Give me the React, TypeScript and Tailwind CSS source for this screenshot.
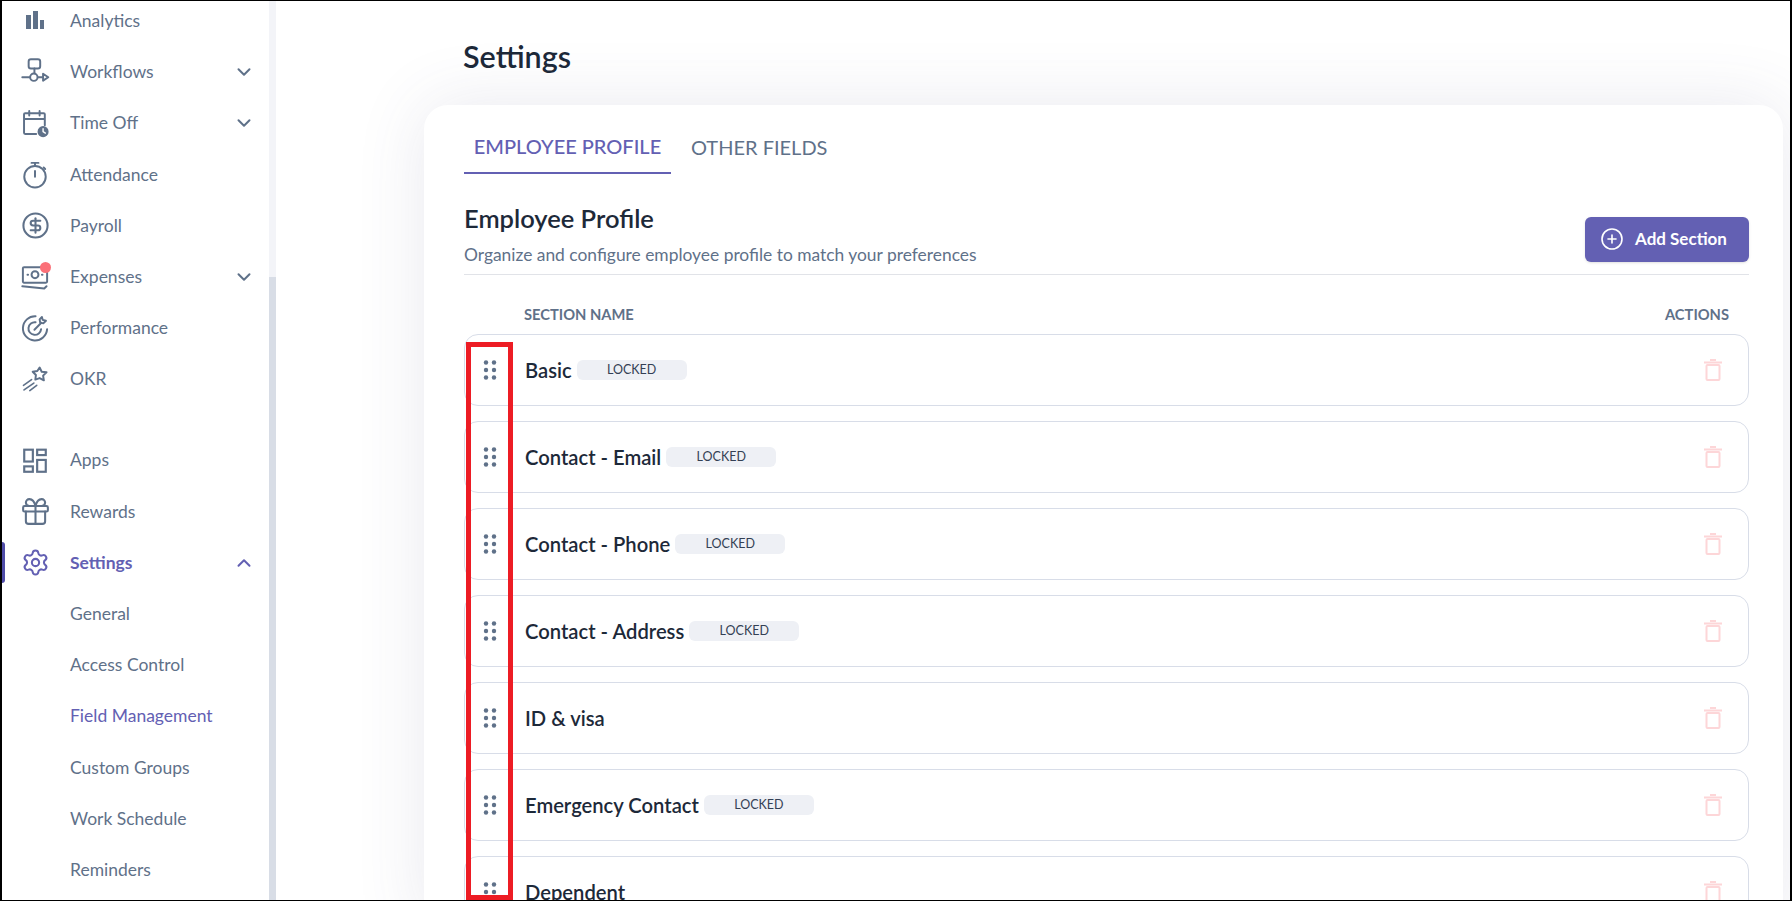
import { ChevronDown, ChevronUp, CirclePlus, CircleDollarSign, Gift, Settings } from "lucide-react";
import type { ReactNode } from "react";

const Svg = ({ children }: { children: ReactNode }) => (
  <svg width="30" height="30" viewBox="0 0 26 26" fill="none" stroke="currentColor" strokeWidth="1.7" strokeLinecap="round" strokeLinejoin="round">
    {children}
  </svg>
);

const AnalyticsIcon = () => (
  <svg width="26" height="26" viewBox="0 0 26 26" fill="currentColor">
    <rect x="4" y="7" width="5" height="14" />
    <rect x="11" y="3" width="5" height="18" />
    <rect x="18" y="12" width="4" height="9" />
  </svg>
);

const WorkflowsIcon = () => (
  <Svg>
    <rect x="7.5" y="2" width="10" height="8" rx="2" />
    <path d="M12.5 10v4" />
    <circle cx="12" cy="17.5" r="3.2" />
    <path d="M2 17.5h6.5M15.5 17.5h4M20 14.5l4.5 3-4.5 3z" />
  </Svg>
);

const TimeOffIcon = () => (
  <Svg>
    <path d="M14 22.500H4.500a1 1 0 0 1-1-1V5.500a1 1 0 0 1 1-1h16a1 1 0 0 1 1 1V15M3.500 9.500h18M8 2.500v4M17 2.500v4" />
    <circle cx="20" cy="20.500" r="4.800" fill="currentColor" stroke="none" />
    <path d="M20 18v2.500l2 1.200" stroke="#fff" strokeWidth="1.200" />
  </Svg>
);

const AttendanceIcon = () => (
  <Svg>
    <circle cx="13" cy="14.500" r="9.300" />
    <path d="M10 2.500h6M13 2.500v2.500M13 9.500v5M20.500 6.500l1.300 1.300" />
  </Svg>
);

const ExpensesIcon = () => (
  <Svg>
    <path d="M3.500 4.500h19a1 1 0 0 1 1 1v11.500a1 1 0 0 1-1 1h-19a1 1 0 0 1-1-1V5.500a1 1 0 0 1 1-1z" />
    <circle cx="13" cy="11" r="3" />
    <path d="M6.500 11h.5M19 11h.5M2 21l19 2 2-2" />
  </Svg>
);

const PerformanceIcon = () => (
  <Svg>
    <path d="M13.500 2.800A10.500 10.500 0 1 0 23.500 14" />
    <path d="M13.500 8a5.500 5.500 0 1 0 4.800 6" />
    <path d="M12.500 14.500l6-6" />
    <path d="M17 5.500l2-2 .7 2.500 2.800.7-2.300 2.300-2.700-.7z" />
  </Svg>
);

const OkrIcon = () => (
  <Svg>
    <path d="M17 3l1.800 3.700 4.200.5-3 2.900.7 4.100-3.700-2-3.700 1.300.5-4-2.800-2.800 4-.7z" />
    <path d="M10 13.500l-7 5M12 16.500l-8.500 6M14.500 18.500l-6 4.500" strokeWidth="1.400" />
  </Svg>
);

const AppsIcon = () => (
  <svg width="28" height="28" viewBox="0 0 26 26" fill="none" stroke="currentColor" strokeWidth="2">
    <rect x="3" y="2.500" width="8" height="11" />
    <rect x="15" y="2.500" width="8" height="5" />
    <rect x="15" y="12" width="8" height="11" />
    <rect x="3" y="18" width="8" height="5" />
  </svg>
);

const TrashIcon = () => (
  <svg width="18" height="22" viewBox="0 0 18 22" fill="none" stroke="#fdd6d8" strokeWidth="2">
    <path d="M6 1h6M0 3.500h18" />
    <rect x="2.500" y="6" width="13" height="15" rx="1" />
  </svg>
);

const GripDots = () => (
  <svg width="14" height="20" viewBox="0 0 14 20" fill="#5f7189">
    {[2.500, 10, 17.500].map((cy) => (
      <g key={cy}>
        <circle cx="3" cy={cy} r="2.200" />
        <circle cx="11" cy={cy} r="2.200" />
      </g>
    ))}
  </svg>
);

type NavItem = { label: string; icon?: ReactNode; chevron?: boolean; dot?: boolean };

const mainNav: NavItem[] = [
  { label: "Analytics", icon: <AnalyticsIcon /> },
  { label: "Workflows", icon: <WorkflowsIcon />, chevron: true },
  { label: "Time Off", icon: <TimeOffIcon />, chevron: true },
  { label: "Attendance", icon: <AttendanceIcon /> },
  { label: "Payroll", icon: <CircleDollarSign size={29} strokeWidth={1.7} /> },
  { label: "Expenses", icon: <ExpensesIcon />, chevron: true, dot: true },
  { label: "Performance", icon: <PerformanceIcon /> },
  { label: "OKR", icon: <OkrIcon /> },
];

const settingsLinks = ["General", "Access Control", "Field Management", "Custom Groups", "Work Schedule", "Reminders"];

const sections = [
  { name: "Basic", locked: true },
  { name: "Contact - Email", locked: true },
  { name: "Contact - Phone", locked: true },
  { name: "Contact - Address", locked: true },
  { name: "ID & visa", locked: false },
  { name: "Emergency Contact", locked: true },
  { name: "Dependent", locked: false },
];

const NavRow = ({ item }: { item: NavItem }) => (
  <div className="flex h-[51.2px] shrink-0 items-center text-[#5f7189]">
    <div className="relative mr-[2px] flex w-[66px] shrink-0 justify-center">
      {item.icon}
      {item.dot && <span className="absolute top-0 left-[38px] h-[11px] w-[11px] rounded-full bg-[#fb7078]" />}
    </div>
    <span className="flex-1 text-[17.5px]">{item.label}</span>
    {item.chevron && <ChevronDown size={22} strokeWidth={2.2} className="mr-[14px]" />}
  </div>
);

const Sidebar = () => (
  <aside className="relative flex w-[267px] shrink-0 flex-col overflow-hidden">
    <div className="-mt-[5.5px] flex flex-col">
      {mainNav.map((item) => (
        <NavRow key={item.label} item={item} />
      ))}
      <div className="mt-[30px]">
        <NavRow item={{ label: "Apps", icon: <AppsIcon /> }} />
        <NavRow item={{ label: "Rewards", icon: <Gift size={33} strokeWidth={1.5} /> }} />
      </div>
      <div className="relative flex h-[51.2px] shrink-0 items-center text-[#6360b3]">
        <span className="absolute top-[5px] left-0 h-[41px] w-[3px] rounded-r-sm bg-[#4f4ca8]" />
        <div className="mr-[2px] flex w-[66px] shrink-0 justify-center">
          <Settings size={29} strokeWidth={1.7} />
        </div>
        <span className="flex-1 text-[17.5px] font-bold">Settings</span>
        <ChevronUp size={22} strokeWidth={2.2} className="mr-[14px]" />
      </div>
      {settingsLinks.map((link) => (
        <div
          key={link}
          className={`flex h-[51.2px] shrink-0 items-center pl-[68px] text-[17.5px] ${
            link === "Field Management" ? "text-[#6360b3]" : "text-[#5f7189]"
          }`}
        >
          {link}
        </div>
      ))}
    </div>
  </aside>
);

const SectionRow = ({ name, locked }: { name: string; locked: boolean }) => (
  <div className="flex h-[72px] shrink-0 items-center rounded-[14px] border border-[#d8dde8] pr-[26px]">
    <div className="flex w-[50px] shrink-0 justify-center">
      <GripDots />
    </div>
    <span className="ml-[10px] text-[20.2px] font-semibold text-[#1d2939]">{name}</span>
    {locked && (
      <span className="ml-[5px] flex h-[20px] w-[110px] items-center justify-center rounded-md bg-[#eef0f5] text-[12.5px] text-[#344054]">
        LOCKED
      </span>
    )}
    <div className="ml-auto flex">
      <TrashIcon />
    </div>
  </div>
);

export default function App() {
  return (
    <div className="relative flex h-[901px] w-full overflow-hidden border-t border-r-2 border-b border-l-2 border-black bg-white font-['Lato','Liberation_Sans',sans-serif]">
      <Sidebar />
      <div className="flex w-[7px] shrink-0 flex-col bg-[#f3f4f8]">
        <div className="mt-[276px] flex-1 bg-[#d8dde6]" />
      </div>
      <main className="flex min-w-0 flex-1 flex-col overflow-hidden pr-[7px] pl-[148px]">
        <div className="flex h-[104px] shrink-0 items-start pt-[36px] pl-[39px]">
          <h1 className="text-[30.5px] leading-[38px] font-semibold text-[#1d2939]">Settings</h1>
        </div>
        <section className="flex flex-1 flex-col rounded-t-[24px] bg-white pt-[17px] pr-[34px] pl-[40px] shadow-[0_0_70px_rgba(70,70,120,0.12)]">
          <div className="flex h-[52px] shrink-0 items-stretch">
            <div className="flex w-[207px] items-center justify-center border-b-2 border-[#6360b3] pb-[3px] text-[20px] font-medium text-[#6360b3]">
              EMPLOYEE PROFILE
            </div>
            <div className="flex items-center px-5 pb-[3px] text-[20px] text-[#5f7189]">OTHER FIELDS</div>
          </div>
          <div className="flex h-[101px] shrink-0 items-end justify-between border-b border-[#e1e3e8] pb-[6px]">
            <div>
              <h2 className="mb-[7px] text-[25.5px] leading-[34px] font-semibold text-[#1d2939]">Employee Profile</h2>
              <p className="text-[17.4px] leading-[26px] text-[#5f7189]">
                Organize and configure employee profile to match your preferences
              </p>
            </div>
            <button className="mb-[6px] flex h-[45px] w-[164px] items-center gap-[11px] rounded-md bg-[#6360b3] pb-[2px] pl-[15px] text-[17px] font-bold text-white shadow-sm">
              <CirclePlus size={24} strokeWidth={1.6} />
              Add Section
            </button>
          </div>
          <div className="flex h-[59px] shrink-0 items-end justify-between pr-[20px] pb-[9px] pl-[60px] text-[14.7px] font-bold text-[#5f7189]">
            <span>SECTION NAME</span>
            <span>ACTIONS</span>
          </div>
          <div className="flex flex-col gap-[15px]">
            {sections.map((s) => (
              <SectionRow key={s.name} name={s.name} locked={s.locked} />
            ))}
          </div>
        </section>
      </main>
      {/* red annotation box over the drag handles */}
      <div className="absolute top-[341px] left-[464px] h-[558px] w-[47px] border-[5px] border-[#ed1c24]" />
    </div>
  );
}
